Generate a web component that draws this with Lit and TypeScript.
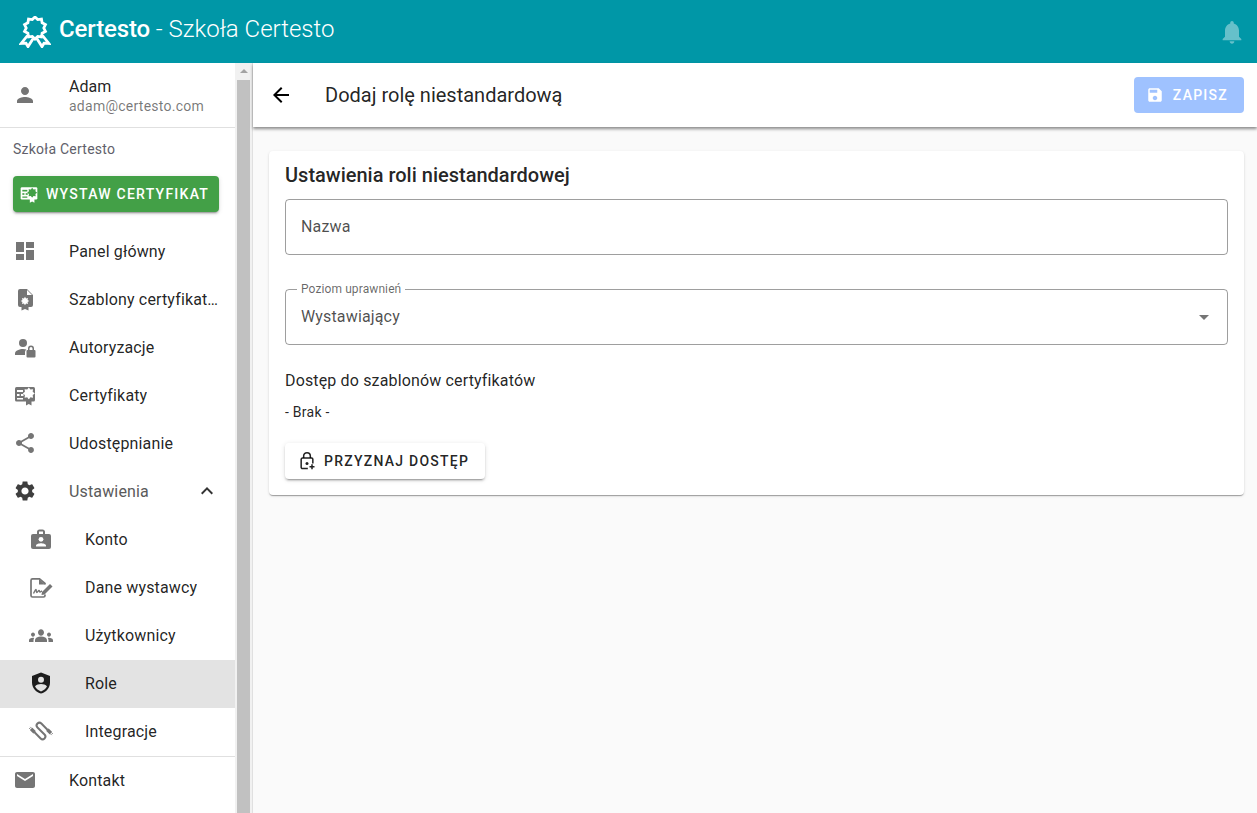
import { LitElement, css, html, svg } from "lit";
import { customElement } from "lit/decorators.js";

const P = {
  person: "M12 12c2.21 0 4-1.79 4-4s-1.79-4-4-4-4 1.79-4 4 1.79 4 4 4zm0 2c-2.67 0-8 1.34-8 4v2h16v-2c0-2.66-5.33-4-8-4z",
  dashboard: "M3 13h8V3H3v10zm0 8h8v-6H3v6zm10 0h8V11h-8v10zm0-18v6h8V3h-8z",
  share: "M18 16.08c-.76 0-1.44.3-1.96.77L8.91 12.7c.05-.23.09-.46.09-.7s-.04-.47-.09-.7l7.05-4.11c.54.5 1.25.81 2.04.81 1.66 0 3-1.34 3-3s-1.34-3-3-3-3 1.34-3 3c0 .24.04.47.09.7L8.04 9.81C7.5 9.31 6.79 9 6 9c-1.66 0-3 1.34-3 3s1.34 3 3 3c.79 0 1.5-.31 2.04-.81l7.12 4.16c-.05.21-.08.43-.08.65 0 1.61 1.31 2.92 2.92 2.92 1.61 0 2.92-1.31 2.92-2.92s-1.31-2.92-2.92-2.92z",
  gear: "M19.14,12.94c0.04-0.3,0.06-0.61,0.06-0.94c0-0.32-0.02-0.64-0.07-0.94l2.03-1.58c0.18-0.14,0.23-0.41,0.12-0.61 l-1.92-3.32c-0.12-0.22-0.37-0.29-0.59-0.22l-2.39,0.96c-0.5-0.38-1.03-0.7-1.62-0.94L14.4,2.81c-0.04-0.24-0.24-0.41-0.48-0.41 h-3.84c-0.24,0-0.43,0.17-0.47,0.41L9.25,5.35C8.66,5.59,8.12,5.92,7.63,6.29L5.24,5.33c-0.22-0.08-0.47,0-0.59,0.22L2.74,8.87 C2.62,9.08,2.66,9.34,2.86,9.48l2.03,1.58C4.84,11.36,4.8,11.69,4.8,12s0.02,0.64,0.07,0.94l-2.03,1.58 c-0.18,0.14-0.23,0.41-0.12,0.61l1.92,3.32c0.12,0.22,0.37,0.29,0.59,0.22l2.39-0.96c0.5,0.38,1.03,0.7,1.62,0.94l0.36,2.54 c0.05,0.24,0.24,0.41,0.48,0.41h3.84c0.24,0,0.44-0.17,0.47-0.41l0.36-2.54c0.59-0.24,1.13-0.56,1.62-0.94l2.39,0.96 c0.22,0.08,0.47,0,0.59-0.22l1.92-3.32c0.12-0.22,0.07-0.47-0.12-0.61L19.14,12.94z M12,15.6c-1.98,0-3.6-1.62-3.6-3.6 s1.62-3.6,3.6-3.6s3.6,1.62,3.6,3.6S13.98,15.6,12,15.6z",
  expandLess: "M12 8l-6 6 1.41 1.41L12 10.83l4.59 4.58L18 14z",
  email: "M20 4H4c-1.1 0-1.99.9-1.99 2L2 18c0 1.1.9 2 2 2h16c1.1 0 2-.9 2-2V6c0-1.1-.9-2-2-2zm0 4l-8 5-8-5V6l8 5 8-5v2z",
  back: "M20 11H7.83l5.59-5.59L12 4l-8 8 8 8 1.41-1.41L7.83 13H20v-2z",
  save: "M17 3H5c-1.11 0-2 .9-2 2v14c0 1.1.89 2 2 2h14c1.1 0 2-.9 2-2V7l-4-4zm-5 16c-1.66 0-3-1.34-3-3s1.34-3 3-3 3 1.34 3 3-1.34 3-3 3zm3-10H5V5h10v4z",
  bell: "M12 22c1.1 0 2-.9 2-2h-4c0 1.1.89 2 2 2zm6-6v-5c0-3.07-1.64-5.64-4.5-6.32V4c0-.83-.67-1.5-1.5-1.5s-1.5.67-1.5 1.5v.68C7.63 5.36 6 7.92 6 11v5l-2 2v1h16v-1l-2-2z",
  group: "M12 12.75c1.63 0 3.07.39 4.24.9 1.08.48 1.76 1.56 1.76 2.73V18H6v-1.61c0-1.18.68-2.26 1.76-2.73 1.17-.52 2.61-.91 4.24-.91zM4 13c1.1 0 2-.9 2-2s-.9-2-2-2-2 .9-2 2 .9 2 2 2zm1.13 1.1C4.76 14.04 4.39 14 4 14c-.99 0-1.93.21-2.78.58C.48 14.9 0 15.62 0 16.43V18h4.5v-1.61c0-.83.23-1.61.63-2.29zM20 13c1.1 0 2-.9 2-2s-.9-2-2-2-2 .9-2 2 .9 2 2 2zm4 3.43c0-.81-.48-1.53-1.22-1.85-.85-.37-1.79-.58-2.78-.58-.39 0-.76.04-1.13.1.4.68.63 1.46.63 2.29V18H24v-1.57zM12 6c1.66 0 3 1.34 3 3s-1.34 3-3 3-3-1.34-3-3 1.34-3 3-3z",
  arrowDrop: "M7 10l5 5 5-5z",
};

// zig-zag ring used by the seal icons
function seal(cx: number, cy: number, r1: number, r2: number, n: number) {
  const pts: string[] = [];
  for (let i = 0; i < n * 2; i++) {
    const r = i % 2 ? r2 : r1;
    const a = (Math.PI * i) / n - Math.PI / 2;
    pts.push(`${(cx + r * Math.cos(a)).toFixed(2)},${(cy + r * Math.sin(a)).toFixed(2)}`);
  }
  return pts.join(" ");
}

const icon = (d: string) => html`<svg viewBox="0 0 24 24" fill="currentColor"><path d=${d}></path></svg>`;

const wrap = (body: unknown) => html`<svg viewBox="0 0 24 24" fill="currentColor">${body}</svg>`;

const certIcon = (hole: string) =>
  wrap(svg`
    <rect x="2" y="4" width="20" height="14.500" rx="1.500"></rect>
    <rect x="4" y="7" width="6" height="2" fill=${hole}></rect>
    <rect x="4" y="11" width="2.500" height="2" fill=${hole}></rect>
    <rect x="8" y="11" width="2.500" height="2" fill=${hole}></rect>
    <rect x="4" y="15" width="6" height="1.500" fill=${hole}></rect>
    <polygon points=${seal(15.8, 10.4, 6, 4.2, 8)} fill=${hole}></polygon>
    <path d="M13 16.500h5.500V22.500l-2.750-1.500L13 22.500z"></path>
  `);

const templateIcon = wrap(svg`
  <path d="M7 2h7l6 6v10a2 2 0 0 1-2 2h-2.500v3.500l-3.500-1.500-3.500 1.500V20H7a2 2 0 0 1-2-2V4a2 2 0 0 1 2-2z"></path>
  <path d="M14 3l5 5h-5z" fill="#fff"></path>
  <polygon points=${seal(12, 14, 4.200, 2.800, 8)} fill="#fff"></polygon>
`);

const authIcon = wrap(svg`
  <circle cx="10" cy="8" r="4"></circle>
  <path d="M2 20v-1.500c0-2.800 4.600-4.500 8-4.500 1.200 0 2.400.2 3.500.500-.9.700-1.500 1.800-1.500 3V20z"></path>
  <path fill-rule="evenodd" d="M15 15v-1.500a3 3 0 0 1 6 0V15h.500a1 1 0 0 1 1 1v5.500a1 1 0 0 1-1 1h-7a1 1 0 0 1-1-1V16a1 1 0 0 1 1-1zm1.500 0h3v-1.500a1.500 1.500 0 0 0-3 0z"></path>
`);

const badgeIcon = wrap(svg`
  <rect x="2" y="7" width="20" height="15" rx="2"></rect>
  <path d="M8 7V4.500A2.500 2.500 0 0 1 10.500 2.500h3A2.500 2.500 0 0 1 16 4.500V7h-2V4.500h-4V7z"></path>
  <circle cx="12" cy="12.300" r="2.400" fill="#fff"></circle>
  <path d="M7 19.500v-.8c0-1.600 3.300-2.400 5-2.400s5 .8 5 2.400v.8z" fill="#fff"></path>
`);

const signIcon = wrap(svg`
  <path d="M16 9.500V8.500L10.500 3.900H3.500A1.500 1.500 0 0 0 2 5.400v15.100A1.500 1.500 0 0 0 3.500 22h11A1.500 1.500 0 0 0 16 20.500V19.500" fill="none" stroke="currentColor" stroke-width="1.700"></path>
  <path d="M10 4v5.500h6z"></path>
  <path d="M4.500 18.500c1-2 2-4 2.500-4s0 3 .8 3 1.500-2 2.200-2 .3 1.500 1 1.500 1-.5 2-1" fill="none" stroke="currentColor" stroke-width="1.400"></path>
  <path d="M13 17l8-8 2.500 2.500-8 8-3 .5z"></path>
`);

const shieldIcon = wrap(svg`
  <path d="M12 1.500l9 3.500v6.500c0 5.300-3.800 9.800-9 11-5.200-1.200-9-5.700-9-11V5z" fill="#1d1d1d"></path>
  <circle cx="12" cy="8.800" r="3" fill="#e3e3e3"></circle>
  <path d="M6 15.500c1.200-1.700 3.800-2.400 6-2.400s4.800.7 6 2.400c-1.200 2.300-3.400 3.900-6 4.900-2.600-1-4.800-2.600-6-4.900z" fill="#e3e3e3"></path>
`);

const cableIcon = wrap(svg`
  <g transform="rotate(45 12 12)">
    <path d="M8 17.500H17a2.750 2.750 0 0 0 0-5.500H7a2.750 2.750 0 0 1 0-5.500H16" fill="none" stroke="currentColor" stroke-width="2"></path>
    <rect x="3.500" y="15.800" width="5" height="3.400" rx=".5"></rect>
    <rect x="15.500" y="4.800" width="5" height="3.400" rx=".5"></rect>
    <path d="M1.500 16.700h2M1.500 18.300h2M20.500 5.700h2M20.500 7.300h2" stroke="currentColor" stroke-width=".8"></path>
  </g>
`);

const groupIcon = wrap(svg`<path d=${P.group} transform="translate(0 -.2) scale(1 1.07)"></path>`);

const lockPlusIcon = wrap(svg`
  <path d="M8 8.500V6a4 4 0 0 1 8 0v2.500" fill="none" stroke="currentColor" stroke-width="1.800"></path>
  <path d="M13 21H6.500A1.500 1.500 0 0 1 5 19.500V10a1.500 1.500 0 0 1 1.500-1.500h11A1.500 1.500 0 0 1 19 10v5" fill="none" stroke="currentColor" stroke-width="1.800"></path>
  <circle cx="12" cy="15" r="1.800"></circle>
  <path d="M18 16v6M15 19h6" stroke="currentColor" stroke-width="1.800" fill="none"></path>
`);

const logo = html`<svg viewBox="0 0 32 32" fill="none" stroke="#fff" stroke-width="2.800">
  <polygon points=${seal(16, 12, 11, 8.800, 10)}></polygon>
  <path d="M8.500 19.500L2.200 27.500l4.800-.3 2 3.400 5.200-8.200M23.500 19.500l6.300 8-4.800-.3-2 3.400-5.200-8.200"></path>
</svg>`;

type NavItem = { label: string; icon: unknown; active?: boolean };

const mainItems: NavItem[] = [
  { label: "Panel główny", icon: icon(P.dashboard) },
  { label: "Szablony certyfikatów", icon: templateIcon },
  { label: "Autoryzacje", icon: authIcon },
  { label: "Certyfikaty", icon: certIcon("#fff") },
  { label: "Udostępnianie", icon: icon(P.share) },
];

const settingsItems: NavItem[] = [
  { label: "Konto", icon: badgeIcon },
  { label: "Dane wystawcy", icon: signIcon },
  { label: "Użytkownicy", icon: groupIcon },
  { label: "Role", icon: shieldIcon, active: true },
  { label: "Integracje", icon: cableIcon },
];

@customElement("app-root")
export class AppRoot extends LitElement {
  static styles = css`
    :host {
      display: flex;
      flex-direction: column;
      width: 1257px;
      height: 813px;
      overflow: hidden;
      font-family: Roboto, sans-serif;
      color: rgba(0, 0, 0, 0.87);
      background: #fafafa;
    }
    svg {
      display: block;
      width: 24px;
      height: 24px;
      flex: none;
    }

    .topbar {
      display: flex;
      align-items: center;
      height: 63px;
      flex: none;
      padding: 0 11px 0 19px;
      background: #0097a7;
      color: #fff;
    }
    .logo svg {
      width: 32px;
      height: 32px;
    }
    .brand {
      margin-left: 8px;
      padding-bottom: 5px;
      font-size: 24px;
      font-weight: 300;
      line-height: 32px;
      white-space: pre;
      flex: 1;
    }
    .brand b {
      font-weight: 500;
      letter-spacing: -0.15px;
    }
    .bell {
      color: rgba(255, 255, 255, 0.4);
    }
    .bell svg {
      width: 28px;
      height: 28px;
    }

    .body {
      display: flex;
      flex: 1;
      min-height: 0;
    }
    .side {
      display: flex;
      width: 253px;
      flex: none;
      background: #fff;
      border-right: 1px solid #e0e0e0;
      box-sizing: border-box;
    }
    .side-content {
      width: 235px;
      flex: none;
    }
    .scroll {
      display: flex;
      flex-direction: column;
      align-items: center;
      width: 17px;
      flex: none;
      background: #f1f1f1;
    }
    .scroll-up {
      width: 0;
      height: 0;
      margin-top: 6px;
      border-left: 4px solid transparent;
      border-right: 4px solid transparent;
      border-bottom: 4px solid #a3a3a3;
    }
    .scroll-thumb {
      align-self: stretch;
      flex: 1;
      margin: 7px 2px 0;
      background: #c1c1c1;
    }

    .user {
      display: flex;
      align-items: center;
      height: 65px;
      box-sizing: border-box;
      border-bottom: 1px solid #e0e0e0;
      padding-left: 13px;
      color: #757575;
    }
    .user-text {
      margin-left: 32px;
      margin-top: 3px;
    }
    .user-name {
      font-size: 16px;
      line-height: 20px;
      color: rgba(0, 0, 0, 0.87);
    }
    .user-mail {
      margin-top: -1px;
      font-size: 14px;
      line-height: 20px;
      letter-spacing: 0.25px;
      color: rgba(0, 0, 0, 0.54);
    }
    .school {
      padding: 13px 13px 0;
      font-size: 14px;
      letter-spacing: 0.25px;
      line-height: 16px;
      color: #615f6b;
    }
    .issue {
      display: flex;
      align-items: center;
      gap: 7px;
      height: 36px;
      margin: 19px 16px 16px 13px;
      padding: 0 6px;
      border-radius: 4px;
      background: #43a047;
      color: #fff;
      font-size: 14px;
      font-weight: 500;
      letter-spacing: 1.25px;
      white-space: nowrap;
      box-shadow: 0 3px 1px -2px rgba(0, 0, 0, 0.2), 0 2px 2px rgba(0, 0, 0, 0.14), 0 1px 5px rgba(0, 0, 0, 0.12);
    }
    .issue svg {
      width: 20px;
      height: 20px;
    }

    .row {
      display: flex;
      align-items: center;
      height: 48px;
      box-sizing: border-box;
      padding: 0 0 2px 13px;
      color: #757575;
    }
    .row.sub {
      padding-left: 29px;
    }
    .row.active {
      background: #e3e3e3;
      color: #1d1d1d;
    }
    .row-label {
      margin-left: 32px;
      max-width: 151px;
      font-size: 16px;
      letter-spacing: 0.15px;
      color: rgba(0, 0, 0, 0.87);
      white-space: nowrap;
      overflow: hidden;
      text-overflow: ellipsis;
    }
    .row.open {
      color: #3e3e3e;
    }
    .row.open .row-label {
      flex: 1;
      color: #5a5a5a;
    }
    .chev {
      margin-right: 16px;
      color: #333;
    }
    .divider {
      height: 1px;
      background: #e0e0e0;
    }

    .main {
      flex: 1;
      min-width: 0;
    }
    .toolbar {
      display: flex;
      align-items: center;
      height: 64px;
      padding: 0 13px 0 16px;
      background: #fff;
      box-shadow: 0 2px 3px rgba(0, 0, 0, 0.45);
    }
    .toolbar-back {
      color: #000;
    }
    .toolbar-title {
      flex: 1;
      margin-left: 32px;
      font-size: 20px;
      font-weight: 400;
    }
    .save {
      display: flex;
      align-items: center;
      gap: 9px;
      height: 36px;
      padding: 0 16px 0 12px;
      border-radius: 4px;
      background: #9fc2ff;
      color: #fff;
      font-size: 14px;
      font-weight: 500;
      letter-spacing: 1.25px;
    }
    .save svg {
      width: 18px;
      height: 18px;
    }

    .card {
      margin: 24px 13px 0 16px;
      padding: 12px 16px 16px;
      border-radius: 4px;
      background: #fff;
      box-shadow: 0 2px 1px -1px rgba(0, 0, 0, 0.2), 0 1px 1px rgba(0, 0, 0, 0.14), 0 1px 3px rgba(0, 0, 0, 0.12);
    }
    .card-title {
      font-size: 20px;
      font-weight: 500;
      line-height: 24px;
    }
    .field {
      position: relative;
      display: flex;
      align-items: center;
      justify-content: space-between;
      height: 56px;
      box-sizing: border-box;
      padding: 0 11px 2px 15px;
      border: 1px solid rgba(0, 0, 0, 0.38);
      border-radius: 4px;
      font-size: 16px;
      letter-spacing: 0.15px;
      color: rgba(0, 0, 0, 0.7);
    }
    .name {
      margin-top: 12px;
    }
    .level {
      margin-top: 34px;
    }
    .level svg {
      margin-top: 2px;
    }
    .float-label {
      position: absolute;
      left: 11px;
      top: -8px;
      padding: 0 4px;
      background: #fff;
      font-size: 12px;
      letter-spacing: 0.1px;
      line-height: 14px;
      color: rgba(0, 0, 0, 0.6);
    }
    .field svg {
      color: #757575;
    }
    .access {
      margin-top: 26px;
      font-size: 16px;
      letter-spacing: 0.15px;
      line-height: 20px;
    }
    .none {
      margin-top: 12px;
      font-size: 14px;
      letter-spacing: 0.25px;
      line-height: 18px;
    }
    .grant {
      display: inline-flex;
      align-items: center;
      gap: 7px;
      height: 36px;
      margin-top: 22px;
      padding: 0 16px 0 12px;
      border-radius: 4px;
      background: #fff;
      font-size: 14px;
      font-weight: 500;
      letter-spacing: 1.25px;
      box-shadow: 0 3px 1px -2px rgba(0, 0, 0, 0.2), 0 2px 2px rgba(0, 0, 0, 0.14), 0 1px 5px rgba(0, 0, 0, 0.12);
    }
    .grant svg {
      width: 20px;
      height: 20px;
    }
  `;

  private row(item: NavItem, sub = false) {
    return html`<div class="row ${sub ? "sub" : ""} ${item.active ? "active" : ""}">
      ${item.icon}<span class="row-label">${item.label}</span>
    </div>`;
  }

  render() {
    return html`
      <div class="topbar">
        <div class="logo">${logo}</div>
        <div class="brand"><b>Certesto</b> - Szkoła Certesto</div>
        <div class="bell">${icon(P.bell)}</div>
      </div>
      <div class="body">
        <aside class="side">
          <div class="side-content">
            <div class="user">
              ${icon(P.person)}
              <div class="user-text">
                <div class="user-name">Adam</div>
                <div class="user-mail">adam@certesto.com</div>
              </div>
            </div>
            <div class="school">Szkoła Certesto</div>
            <div class="issue">${certIcon("#43a047")}WYSTAW CERTYFIKAT</div>
            ${mainItems.map((i) => this.row(i))}
            <div class="row open">
              ${icon(P.gear)}<span class="row-label">Ustawienia</span>
              <span class="chev">${icon(P.expandLess)}</span>
            </div>
            ${settingsItems.map((i) => this.row(i, true))}
            <div class="divider"></div>
            ${this.row({ label: "Kontakt", icon: icon(P.email) })}
          </div>
          <div class="scroll">
            <div class="scroll-up"></div>
            <div class="scroll-thumb"></div>
          </div>
        </aside>
        <main class="main">
          <div class="toolbar">
            <div class="toolbar-back">${icon(P.back)}</div>
            <div class="toolbar-title">Dodaj rolę niestandardową</div>
            <div class="save">${icon(P.save)}ZAPISZ</div>
          </div>
          <section class="card">
            <div class="card-title">Ustawienia roli niestandardowej</div>
            <div class="field name">Nazwa</div>
            <div class="field level">
              <span class="float-label">Poziom uprawnień</span>
              Wystawiający
              ${icon(P.arrowDrop)}
            </div>
            <div class="access">Dostęp do szablonów certyfikatów</div>
            <div class="none">- Brak -</div>
            <div class="grant">${lockPlusIcon}PRZYZNAJ DOSTĘP</div>
          </section>
        </main>
      </div>
    `;
  }
}
